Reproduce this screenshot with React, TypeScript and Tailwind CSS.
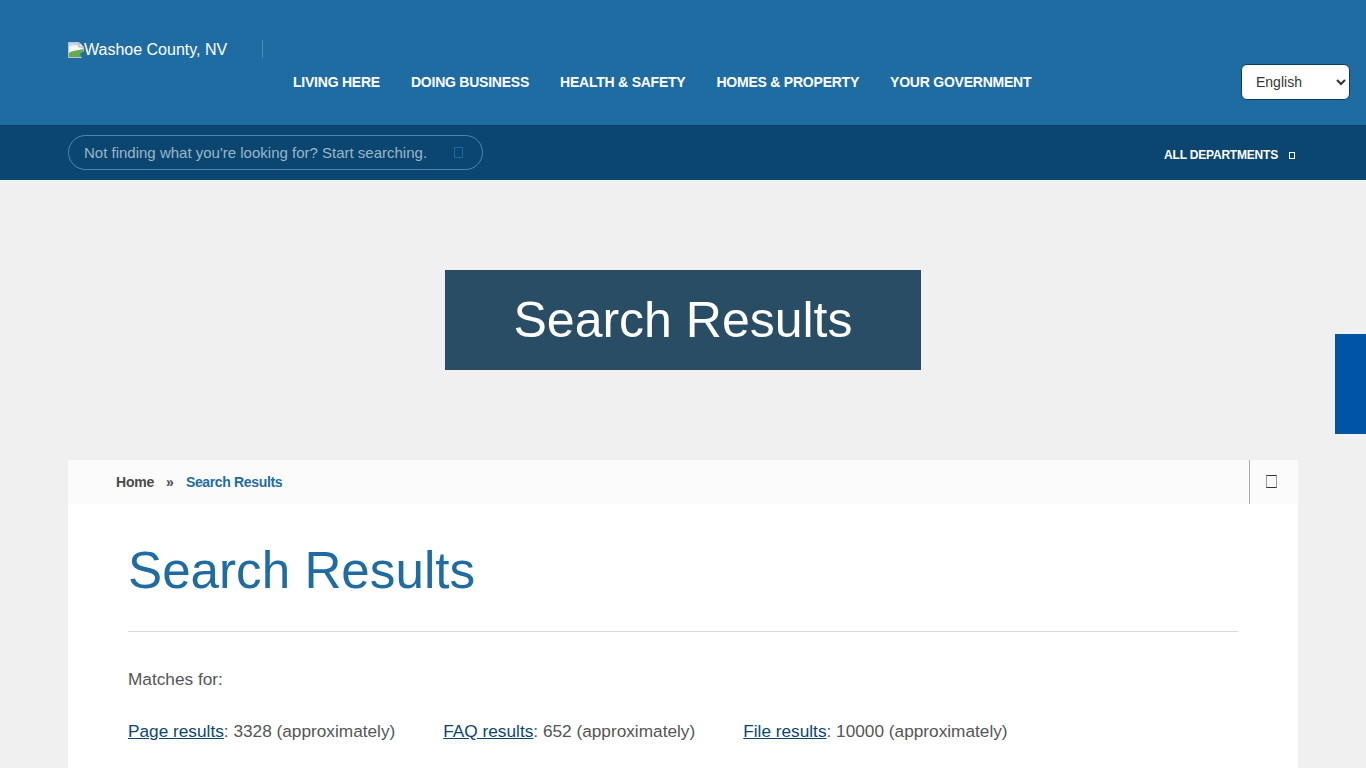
const navItems = ['LIVING HERE', 'DOING BUSINESS', 'HEALTH & SAFETY', 'HOMES & PROPERTY', 'YOUR GOVERNMENT'];

const results = [
  { label: 'Page results', rest: ': 3328 (approximately)' },
  { label: 'FAQ results', rest: ': 652 (approximately)' },
  { label: 'File results', rest: ': 10000 (approximately)' },
];

// the browser's missing image icon
function BrokenImage() {
  return (
    <svg width="16" height="16" viewBox="0 0 16 16" className="shrink-0">
      <path d="M0.5 0.5H11L15.5 5V15.5H0.5Z" fill="#f4f6f8" stroke="#b9c2cc" />
      <path d="M1 11C5 8 9 9 15 7V15H1Z" fill="#6aa84f" />
      <path d="M1 5C4 3 8 3 11 4L11 1H1Z" fill="#c9d6ea" />
      <path d="M11 0.5V5H15.5Z" fill="#ffffff" stroke="#9aa5b1" />
      <path d="M16 9L12 12L14 16H16Z" fill="#1f6da5" />
    </svg>
  );
}

export default function App() {
  return (
    <div className="relative h-screen overflow-hidden bg-[#f0f0f0] font-['Liberation_Sans',Arial,sans-serif]">
      <header className="flex h-[125px] bg-[#1f6ca3] pl-[68px]">
        <div className="mt-[40px] flex h-[18px] w-[195px] shrink-0 items-center self-start border-r border-[#4d8dbb] pt-[2px]">
          <BrokenImage />
          <span className="text-base leading-none text-white">Washoe County, NV</span>
        </div>
        <nav className="ml-[15px] mt-[73px] flex gap-[1px] self-start">
          {navItems.map((item) => (
            <a key={item} className="px-[15px] text-sm leading-[18px] font-bold tracking-[-0.23px] text-white">
              {item}
            </a>
          ))}
        </nav>
        <select className="mt-[64px] ml-auto mr-[16px] h-[36px] w-[109px] self-start rounded-[6px] border border-[#0b3c5d] bg-white pl-[10px] text-sm text-[#333333]">
          <option>English</option>
        </select>
      </header>

      <div className="flex h-[55px] items-center justify-between border-t border-[#08406a] bg-[#0a4670] pr-[71px] pl-[68px]">
        <div className="mb-[1px] flex h-[35px] w-[415px] items-center rounded-full border border-[#4a87b3] pr-[19px] pl-[15px]">
          <span className="mt-[1px] flex-1 text-[15px] text-[#9ab6ca]">Not finding what you're looking for? Start searching.</span>
          <span className="h-[11px] w-[9px] border border-[#1c6a9e]" />
        </div>
        <div className="mt-[4px] flex items-center gap-[11px]">
          <span className="text-xs font-bold tracking-[-0.2px] text-white">ALL DEPARTMENTS</span>
          <span className="h-[7px] w-[6px] border border-white" />
        </div>
      </div>

      <div className="flex h-[280px] items-center justify-center">
        <h1 className="flex h-[100px] w-[476px] items-center justify-center bg-[#2a4d66] text-[50px] text-white">
          Search Results
        </h1>
      </div>

      <main className="mx-[68px] bg-white">
        <div className="flex h-[44px] items-center bg-[#fbfbfb] pl-[48px]">
          <span className="text-sm font-bold tracking-[-0.2px] text-[#4a4a4a]">Home</span>
          <span className="ml-[12px] text-sm font-bold text-[#4a4a4a]">»</span>
          <span className="ml-[12px] text-sm font-bold tracking-[-0.35px] text-[#1f6ca3]">Search Results</span>
          <div className="ml-auto flex h-full w-[49px] items-center justify-center border-l border-[#aaaaaa]">
            <span className="mr-[5px] mb-[2px] h-[13px] w-[11px] border border-x-[#999999] border-y-[#333333]" />
          </div>
        </div>
        <div className="px-[60px]">
          <h2 className="mt-[39px] text-[51.2px] leading-[56px] text-[#1f6ca3]">Search Results</h2>
          <hr className="mt-[32px] border-[#d9d9d9]" />
          <p className="mt-[37px] text-[17.24px] leading-[20px] text-[#555555]">Matches for:</p>
          <div className="mt-[32px] flex gap-[48px] text-[17.24px] leading-[20px] text-[#555555]">
            {results.map((r) => (
              <span key={r.label}>
                <a className="text-[#0a4670] underline">{r.label}</a>
                {r.rest}
              </span>
            ))}
          </div>
          <div className="h-[60px]" />
        </div>
      </main>

      <div className="absolute top-[334px] right-0 h-[100px] w-[31px] bg-[#0054a6]" />
    </div>
  );
}
